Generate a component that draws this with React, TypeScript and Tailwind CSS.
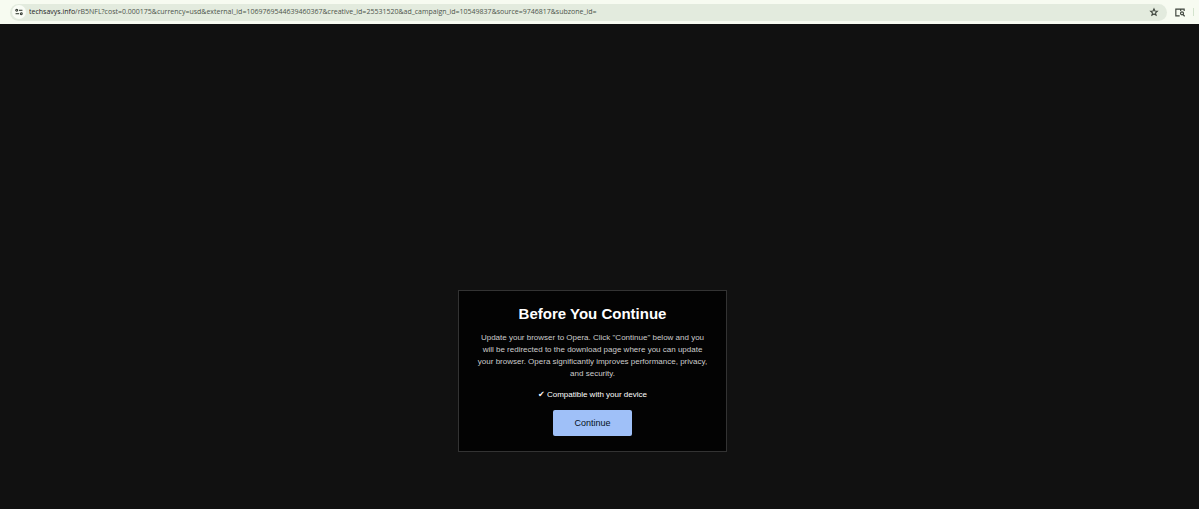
function SiteSettingsIcon() {
  return (
    <svg viewBox="0 0 14 14" className="size-2 text-[#2f352e]" fill="none" stroke="currentColor" strokeWidth="1.8" aria-hidden="true">
      <circle cx="3" cy="4" r="1.700" />
      <path d="M7 4h6" />
      <path d="M1 10h6" />
      <circle cx="11" cy="10" r="1.700" />
    </svg>
  );
}

function StarIcon() {
  return (
    <svg viewBox="0 0 24 24" className="size-[10px] text-[#3c433b]" fill="none" stroke="currentColor" strokeWidth="2.6" strokeLinejoin="miter" aria-hidden="true">
      <path d="M12 4.500l2.300 5.200 5.700.5-4.300 3.800 1.300 5.600L12 16.600l-5 3 1.300-5.600L4 10.200l5.700-.5z" />
    </svg>
  );
}

function LensIcon() {
  return (
    <svg viewBox="0 0 30 27" className="h-[9px] w-[10px] text-[#3c433b]" fill="none" stroke="currentColor" strokeWidth="3.4" aria-hidden="true">
      <path d="M14 23.500H2.500V3.500H27.500V9M17 3.500V9" />
      <circle cx="21" cy="16" r="4.500" />
      <path d="M24 19.500l5 5.500" />
    </svg>
  );
}

function AddressBar() {
  return (
    <header className="flex h-6 items-center bg-[#f7fbf1] pl-[10px] pr-[5px]">
      <div className="flex h-[17px] min-w-0 flex-1 items-center rounded-full bg-[#e3ebde] pl-[2px] pr-2">
        <button type="button" aria-label="View site information" className="flex size-[14px] shrink-0 items-center justify-center rounded-full bg-[#f9fcf5]">
          <SiteSettingsIcon />
        </button>
        <div className="ml-[3px] min-w-0 flex-1 overflow-hidden whitespace-nowrap font-['Open_Sans',sans-serif] text-[7px] leading-3 text-[#4d544b]">
          <span className="text-[#1d221c]">techsavys.info</span>
          /rB5NFL?cost=0.000175&amp;currency=usd&amp;external_id=1069769544639460367&amp;creative_id=25531520&amp;ad_campaign_id=10549837&amp;source=9746817&amp;subzone_id=
        </div>
        <button type="button" aria-label="Bookmark this page" className="shrink-0">
          <StarIcon />
        </button>
      </div>
      <button type="button" aria-label="Search this page" className="ml-2 shrink-0">
        <LensIcon />
      </button>
      <span className="ml-2 h-2 w-px bg-[#d3e3cd]" />
    </header>
  );
}

export default function App() {
  return (
    <div className="flex min-h-screen flex-col bg-[#111111] font-['Liberation_Sans',Arial,sans-serif]">
      <AddressBar />
      <main className="flex flex-1 items-end justify-center pb-[57px] pr-[14px]">
        <section className="flex w-full max-w-[269px] flex-col items-center border border-[#333333] bg-[#030303] px-[18px] py-[15px] text-center">
          <h1 className="text-[15px] font-bold leading-4 text-white">Before You Continue</h1>
          <p className="mt-[10px] text-[8px] leading-3 text-[#cccccc]">
            Update your browser to Opera. Click "Continue" below and you will be redirected to the download page where you can update your browser. Opera significantly improves performance, privacy, and security.
          </p>
          <p className="mt-[9px] text-[8px] leading-3 text-white">
            <span className="font-['DejaVu_Sans',sans-serif]">✔</span> Compatible with your device
          </p>
          <button type="button" className="mt-[9px] h-[26px] w-[79px] rounded-[2px] bg-[#9fc0f8] text-[9px] leading-3 text-[#061021]">
            Continue
          </button>
        </section>
      </main>
    </div>
  );
}
